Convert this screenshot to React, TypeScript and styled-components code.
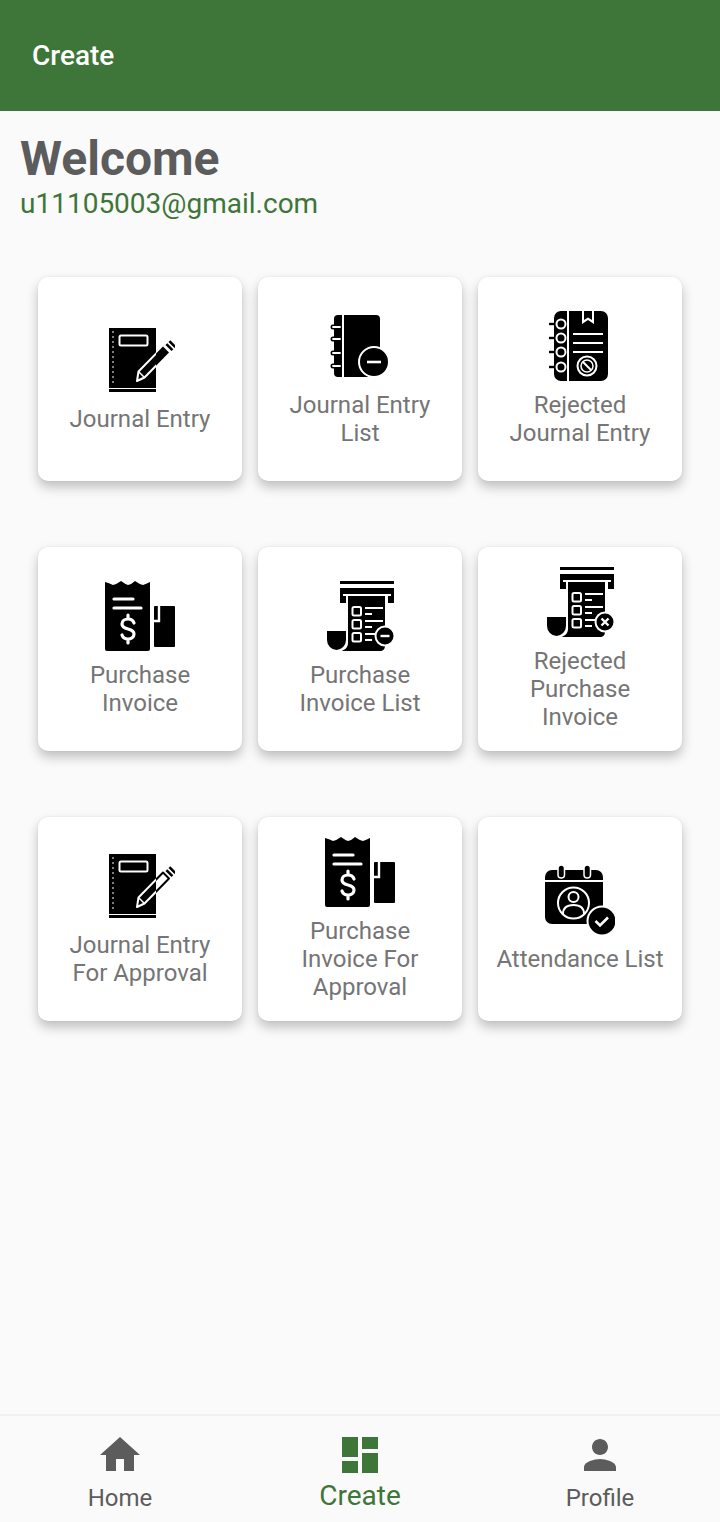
import React from "react";
import styled, { createGlobalStyle } from "styled-components";

const GREEN = "#3e7538";
const GREY = "#5c5c5c";

const GlobalStyle = createGlobalStyle`
  html, body {
    margin: 0;
    padding: 0;
    background: #fafafa;
  }
  * {
    box-sizing: border-box;
  }
`;

const Screen = styled.div`
  width: 720px;
  height: 1522px;
  display: flex;
  flex-direction: column;
  background: #fafafa;
  font-family: Roboto, "Noto Sans", sans-serif;
  overflow: hidden;
`;

const AppBar = styled.header`
  height: 111px;
  flex: none;
  display: flex;
  align-items: center;
  padding-left: 32px;
  background: ${GREEN};
  color: #fff;
  font-size: 28px;
  font-weight: 500;
`;

const Content = styled.main`
  flex: 1;
  display: flex;
  flex-direction: column;
`;

const Intro = styled.div`
  padding: 20px 20px 0 20px;
`;

const Title = styled.h1`
  margin: 0;
  color: ${GREY};
  font-size: 48px;
  line-height: 56px;
  font-weight: 700;
`;

const Email = styled.p`
  margin: 0;
  color: ${GREEN};
  font-size: 28px;
  line-height: 34px;
`;

const CardGrid = styled.div`
  display: grid;
  grid-template-columns: repeat(3, 204px);
  grid-auto-rows: 204px;
  column-gap: 16px;
  row-gap: 66px;
  padding: 56px 38px 0;
`;

const Card = styled.div`
  display: flex;
  flex-direction: column;
  align-items: center;
  justify-content: center;
  gap: 10px;
  padding: 0 17px;
  background: #fff;
  border-radius: 10px;
  box-shadow: 0 6px 12px rgba(0, 0, 0, 0.24), 0 0 2px rgba(0, 0, 0, 0.08);
`;

const CardLabel = styled.span`
  color: #757575;
  font-size: 24px;
  line-height: 28px;
  text-align: center;
`;

const BottomNav = styled.nav`
  height: 108px;
  flex: none;
  display: grid;
  grid-template-columns: repeat(3, 1fr);
  background: #fafafa;
  border-top: 2px solid #f1f1f1;
`;

const NavItem = styled.div<{ $active?: boolean }>`
  display: flex;
  flex-direction: column;
  align-items: center;
  padding-top: 15px;
  color: ${(p) => (p.$active ? GREEN : GREY)};
  font-size: ${(p) => (p.$active ? "28px" : "24px")};
  line-height: ${(p) => (p.$active ? "34px" : "38px")};
`;

const NavIcon = styled.svg`
  width: 48px;
  height: 48px;
  fill: currentColor;
`;

const IconSvg = styled.svg`
  width: 70px;
  height: 70px;
  flex: none;
`;

const W = { stroke: "#fff", fill: "none", strokeWidth: 2 } as const;

const PENCIL = "M32 56l1.500-9.500 24.500-25 6 6-24.500 25z";

// white where the pencil crosses the notebook, black past its edge
const JournalIcon = ({ outline }: { outline?: boolean }) => {
  const clipId = outline ? "book-outline" : "book-solid";
  return (
    <IconSvg viewBox="0 0 70 70">
      <defs>
        <clipPath id={clipId}>
          <rect x="4" y="3" width="47" height="60" />
        </clipPath>
      </defs>
      <rect x="4" y="3" width="47" height="60" />
      <rect x="4" y="64" width="47" height="3" />
      <path d="M8 6v54" {...W} strokeWidth="1" strokeDasharray="2 3" />
      <rect x="14.500" y="10.500" width="28" height="10" rx="1.500" {...W} />
      {outline ? (
        <path d={PENCIL} stroke="#000" strokeWidth="2" fill="none" strokeLinejoin="round" />
      ) : (
        <path d={PENCIL} fill="#000" />
      )}
      <path
        d={PENCIL}
        clipPath={`url(#${clipId})`}
        {...W}
        strokeLinejoin="round"
      />
      <path d="M33.500 46.500l6 6" {...W} clipPath={`url(#${clipId})`} strokeWidth="1.500" />
      <path d="M60.500 20l6 6 1.800-1.800-6-6zM63.500 17l6 6 1.800-1.800-6-6z" fill="#000" />
    </IconSvg>
  );
};

const JournalListIcon = () => (
  <IconSvg viewBox="0 0 70 70">
    <rect x="9" y="4" width="46" height="62" rx="4" />
    <path d="M18 4v62" {...W} />
    {[16, 28, 42, 55].map((y) => (
      <g key={y}>
        <path d={`M8 ${y}h6`} stroke="#000" strokeWidth="5" strokeLinecap="round" />
        <path d={`M8 ${y}h7`} {...W} strokeWidth="1.800" strokeLinecap="round" />
      </g>
    ))}
    <circle cx="49" cy="51" r="15" stroke="#fff" strokeWidth="2" />
    <path d="M42 51h14" {...W} strokeWidth="2.600" />
  </IconSvg>
);

const RejectedJournalIcon = () => (
  <IconSvg viewBox="0 0 70 70">
    <rect x="9" y="0" width="54" height="70" rx="7" />
    <path d="M23 0v70" {...W} />
    <path d="M37 0v13l6-4 6 4V0z" fill="#fff" />
    <path d="M39 0v9l4-2.500 4 2.500V0z" />
    {[13, 27, 41, 56].map((y) => (
      <g key={y}>
        <path d={`M4 ${y}h9`} stroke="#000" strokeWidth="2.400" />
        <circle cx="16" cy={y} r="4.500" fill="#000" stroke="#fff" strokeWidth="2" />
      </g>
    ))}
    <path d="M28 23h30M28 32h30M28 41h30" {...W} />
    <circle cx="42" cy="55" r="9.500" {...W} />
    <circle cx="42" cy="55" r="6" {...W} strokeWidth="1.500" />
    <path d="M38 51l8 8" {...W} />
  </IconSvg>
);

const PurchaseIcon = () => (
  <IconSvg viewBox="0 0 70 70">
    <path d="M0 1q4 1 8 3 4-1 8-4 4 3 7 4 4-1 7-4 4 3 8 4 3-1 7-3v67a2 2 0 0 1-2 2H2a2 2 0 0 1-2-2z" />
    <path d="M9 18h19M9 27h27" {...W} strokeWidth="3.200" strokeLinecap="round" />
    <path
      d="M29 42c-1-3-3-4-6-4-3 0-6 2-6 5 0 7 12 3 12 10 0 3-3 5-6 5s-5-1-6-4M23 34v4M23 58v4"
      {...W}
      strokeWidth="3.200"
      strokeLinecap="round"
    />
    <rect x="49" y="25" width="21" height="41" rx="1" />
    <path d="M54 25v15h-5" {...W} strokeWidth="2.400" />
  </IconSvg>
);

const ScrollIcon = ({ badge }: { badge: "minus" | "cross" }) => (
  <IconSvg viewBox="0 0 70 70">
    <rect x="15" y="0" width="54" height="3" />
    <path d="M15 7h54v15h-6V13H21v9h-6z" />
    <path d="M18 14h48" {...W} />
    <path d="M23 15h37v50c0 3-2 5-5 5H14c5 0 9-3 9-8z" />
    <path d="M1 49h21v10c0 6-5 11-10.500 11S1 65 1 59z" stroke="#fff" strokeWidth="2" />
    {[26, 39, 52].map((y) => (
      <g key={y}>
        <rect x="27.500" y={y} width="8.500" height="8.500" rx="1.500" {...W} />
        <path d={`M40 ${y + 1}h18M40 ${y + 7}h7`} {...W} />
      </g>
    ))}
    <circle cx="60" cy="55" r="9.500" stroke="#fff" strokeWidth="2" />
    {badge === "minus" ? (
      <path d="M55.500 55h9" {...W} strokeWidth="2.400" />
    ) : (
      <path d="M56.500 51.500l7 7M63.500 51.500l-7 7" {...W} strokeWidth="2.400" />
    )}
  </IconSvg>
);

const AttendanceIcon = () => (
  <IconSvg viewBox="0 0 70 70">
    <rect x="0" y="5" width="58" height="54" rx="7" />
    <path d="M0 16h58" {...W} />
    <rect x="13" y="0" width="6.500" height="13" rx="3.250" stroke="#fff" strokeWidth="1.500" />
    <rect x="39" y="0" width="6.500" height="13" rx="3.250" stroke="#fff" strokeWidth="1.500" />
    <circle cx="28.500" cy="38" r="15.500" {...W} />
    <circle cx="28.500" cy="32" r="5" {...W} />
    <path d="M18 49c0-6 4-9 10.500-9S39 43 39 49" {...W} />
    <circle cx="57" cy="56" r="14.500" stroke="#fff" strokeWidth="2" />
    <path d="M50.500 56l4.500 4.500 8-8" {...W} strokeWidth="2.600" />
  </IconSvg>
);

const cards = [
  { label: "Journal Entry", icon: <JournalIcon /> },
  { label: "Journal Entry List", icon: <JournalListIcon /> },
  { label: "Rejected Journal Entry", icon: <RejectedJournalIcon /> },
  { label: "Purchase Invoice", icon: <PurchaseIcon /> },
  { label: "Purchase Invoice List", icon: <ScrollIcon badge="minus" /> },
  { label: "Rejected Purchase Invoice", icon: <ScrollIcon badge="cross" /> },
  { label: "Journal Entry For Approval", icon: <JournalIcon outline /> },
  { label: "Purchase Invoice For Approval", icon: <PurchaseIcon /> },
  { label: "Attendance List", icon: <AttendanceIcon /> },
];

const navItems = [
  { label: "Home", d: "M10 20v-6h4v6h5v-8h3L12 3 2 12h3v8z" },
  {
    label: "Create",
    active: true,
    d: "M3 13h8V3H3v10zm0 8h8v-6H3v6zm10 0h8V11h-8v10zm0-18v6h8V3h-8z",
  },
  {
    label: "Profile",
    d: "M12 12c2.210 0 4-1.790 4-4s-1.790-4-4-4-4 1.790-4 4 1.790 4 4 4zm0 2c-2.670 0-8 1.340-8 4v2h16v-2c0-2.660-5.330-4-8-4z",
  },
];

export default function App() {
  return (
    <Screen>
      <GlobalStyle />
      <AppBar>Create</AppBar>
      <Content>
        <Intro>
          <Title>Welcome</Title>
          <Email>u11105003@gmail.com</Email>
        </Intro>
        <CardGrid>
          {cards.map((card) => (
            <Card key={card.label}>
              {card.icon}
              <CardLabel>{card.label}</CardLabel>
            </Card>
          ))}
        </CardGrid>
      </Content>
      <BottomNav>
        {navItems.map((item) => (
          <NavItem key={item.label} $active={item.active}>
            <NavIcon viewBox="0 0 24 24">
              <path d={item.d} />
            </NavIcon>
            {item.label}
          </NavItem>
        ))}
      </BottomNav>
    </Screen>
  );
}
